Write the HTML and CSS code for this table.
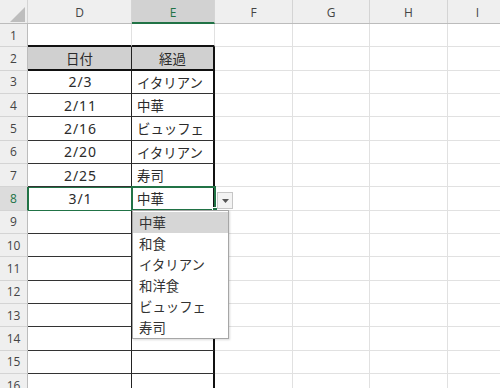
FILE: index.html
```html
<!DOCTYPE html>
<html lang="ja">
<head>
<meta charset="utf-8">
<link rel="stylesheet" href="styles.css">
</head>
<body>
<div class="sheet">
  <div class="row head">
    <div class="corner"><svg width="28" height="24" viewBox="0 0 28 24"><polygon points="10,22 25,7 25,22" fill="#bdbdbd"/></svg></div>
    <div class="ch cd">D</div><div class="ch ce sel">E</div><div class="ch cf">F</div><div class="ch cg">G</div><div class="ch chh">H</div><div class="ch ci">I</div>
  </div>
  <div class="row"><div class="rh">1</div><div class="c d top"></div><div class="c e top"></div><div class="c f"></div><div class="c g"></div><div class="c h"></div><div class="c i"></div></div>
  <div class="row"><div class="rh">2</div><div class="c d th">日付</div><div class="c e th tc">経過</div><div class="c f"></div><div class="c g"></div><div class="c h"></div><div class="c i"></div></div>
  <div class="row"><div class="rh">3</div><div class="c d tb num">2/3</div><div class="c e tb">イタリアン</div><div class="c f"></div><div class="c g"></div><div class="c h"></div><div class="c i"></div></div>
  <div class="row"><div class="rh">4</div><div class="c d tb num">2/11</div><div class="c e tb">中華</div><div class="c f"></div><div class="c g"></div><div class="c h"></div><div class="c i"></div></div>
  <div class="row"><div class="rh">5</div><div class="c d tb num">2/16</div><div class="c e tb">ビュッフェ</div><div class="c f"></div><div class="c g"></div><div class="c h"></div><div class="c i"></div></div>
  <div class="row"><div class="rh">6</div><div class="c d tb num">2/20</div><div class="c e tb">イタリアン</div><div class="c f"></div><div class="c g"></div><div class="c h"></div><div class="c i"></div></div>
  <div class="row"><div class="rh">7</div><div class="c d tb num">2/25</div><div class="c e tb">寿司</div><div class="c f"></div><div class="c g"></div><div class="c h"></div><div class="c i"></div></div>
  <div class="row"><div class="rh sel">8</div><div class="c d tb num">3/1</div><div class="c e tb">中華</div><div class="c f"></div><div class="c g"></div><div class="c h"></div><div class="c i"></div></div>
  <div class="row"><div class="rh">9</div><div class="c d tb"></div><div class="c e tb"></div><div class="c f"></div><div class="c g"></div><div class="c h"></div><div class="c i"></div></div>
  <div class="row"><div class="rh">10</div><div class="c d tb"></div><div class="c e tb"></div><div class="c f"></div><div class="c g"></div><div class="c h"></div><div class="c i"></div></div>
  <div class="row"><div class="rh">11</div><div class="c d tb"></div><div class="c e tb"></div><div class="c f"></div><div class="c g"></div><div class="c h"></div><div class="c i"></div></div>
  <div class="row"><div class="rh">12</div><div class="c d tb"></div><div class="c e tb"></div><div class="c f"></div><div class="c g"></div><div class="c h"></div><div class="c i"></div></div>
  <div class="row"><div class="rh">13</div><div class="c d tb"></div><div class="c e tb"></div><div class="c f"></div><div class="c g"></div><div class="c h"></div><div class="c i"></div></div>
  <div class="row"><div class="rh">14</div><div class="c d tb"></div><div class="c e tb"></div><div class="c f"></div><div class="c g"></div><div class="c h"></div><div class="c i"></div></div>
  <div class="row"><div class="rh">15</div><div class="c d tb"></div><div class="c e tb"></div><div class="c f"></div><div class="c g"></div><div class="c h"></div><div class="c i"></div></div>
  <div class="row"><div class="rh">16</div><div class="c d tb"></div><div class="c e tb"></div><div class="c f"></div><div class="c g"></div><div class="c h"></div><div class="c i"></div></div>

  <div class="selrange"></div>
  <div class="active"></div>
  <div class="handle"></div>
  <div class="ddbtn"><svg width="7" height="4" viewBox="0 0 7 4"><polygon points="0,0 7,0 3.5,4" fill="#555"/></svg></div>
  <ul class="list">
    <li class="hi">中華</li>
    <li>和食</li>
    <li>イタリアン</li>
    <li>和洋食</li>
    <li>ビュッフェ</li>
    <li>寿司</li>
  </ul>
</div>
</body>
</html>
```
FILE: styles.css
```css
* { box-sizing: border-box; }
html, body { margin: 0; padding: 0; background: #fff; }
.sheet {
  position: relative;
  width: 500px;
  height: 388px;
  overflow: hidden;
  display: grid;
  grid-template-rows: 24px repeat(16, 23.333px);
  font-family: "Noto Sans CJK JP", "Noto Sans", sans-serif;
  color: #2b2b2b;
}
.row { display: flex; }
.head { background: #efefef; border-bottom: 1px solid #bcbcbc; }
.corner { width: 28px; flex: none; border-right: 1px solid #d4d4d4; }
.corner svg { display: block; }
.ch {
  flex: none;
  display: flex; align-items: center; justify-content: center;
  font-family: "Open Sans", "Noto Sans", sans-serif;
  font-size: 12px; color: #444;
  border-right: 1px solid #d4d4d4;
  padding-top: 1px;
}
.ch.sel { background: #d2d2d2; color: #217346; border-bottom: 2px solid #217346; margin-bottom: -1px; padding-top: 2px; }
.cd, .d { width: 104px; }
.ce, .e { width: 83px; }
.cf, .f { width: 78px; }
.cg, .g { width: 77px; }
.chh, .h { width: 78px; }
.ci, .i { width: 60px; }
.rh {
  width: 28px; flex: none;
  background: #efefef;
  border-right: 1px solid #bcbcbc;
  border-bottom: 1px solid #d4d4d4;
  display: flex; align-items: center; justify-content: center;
  font-family: "Open Sans", "Noto Sans", sans-serif;
  font-size: 12px; color: #444;
}
.rh.sel { background: #dcdcdc; color: #217346; border-right: 1px solid #217346; }
.c {
  flex: none;
  border-right: 1px solid #e1e1e1;
  border-bottom: 1px solid #e1e1e1;
  display: flex; align-items: center;
  font-size: 13.4px;
  white-space: nowrap;
}
.d { justify-content: center; }
.e { padding-left: 5px; }
.num { font-family: "Noto Sans", "Open Sans", sans-serif; font-size: 14px; letter-spacing: 0.9px; padding-left: 2px; }
.c.top { border-bottom: 2px solid #111; }
.c.th { background: #d0d0d0; border-bottom: 2px solid #111; }
.d.th, .d.tb { border-right: 1px solid #222; }
.e.th, .e.tb { border-right: 2px solid #111; }
.e.tc { justify-content: center; padding-left: 0; }
.c.tb { border-bottom: 1px solid #333; }

.selrange {
  position: absolute; left: 28px; top: 187px; width: 105px; height: 24px;
  border: 1px solid #217346;
}
.active {
  position: absolute; left: 131px; top: 186px; width: 85px; height: 25px;
  border: 2px solid #217346;
}
.handle {
  position: absolute; left: 212px; top: 207px; width: 6px; height: 6px;
  background: #217346; border: 1px solid #fff;
}
.ddbtn {
  position: absolute; left: 217px; top: 192px; width: 16px; height: 17px;
  background: #f3f3f3; border: 1px solid #c6c6c6;
  display: flex; align-items: center; justify-content: center;
}
.ddbtn svg { display: block; }
.list {
  position: absolute; left: 132px; top: 210px; width: 97px; height: 129px;
  margin: 0; padding: 1px 0 0;
  list-style: none;
  background: #fff;
  border: 1px solid #a6a6a6;
  box-shadow: 1px 1px 2px rgba(0,0,0,0.15);
}
.list li {
  height: 21px; line-height: 21px;
  padding-left: 6px;
  font-size: 13.4px; color: #333;
}
.list li.hi { background: #d6d6d6; }
```
